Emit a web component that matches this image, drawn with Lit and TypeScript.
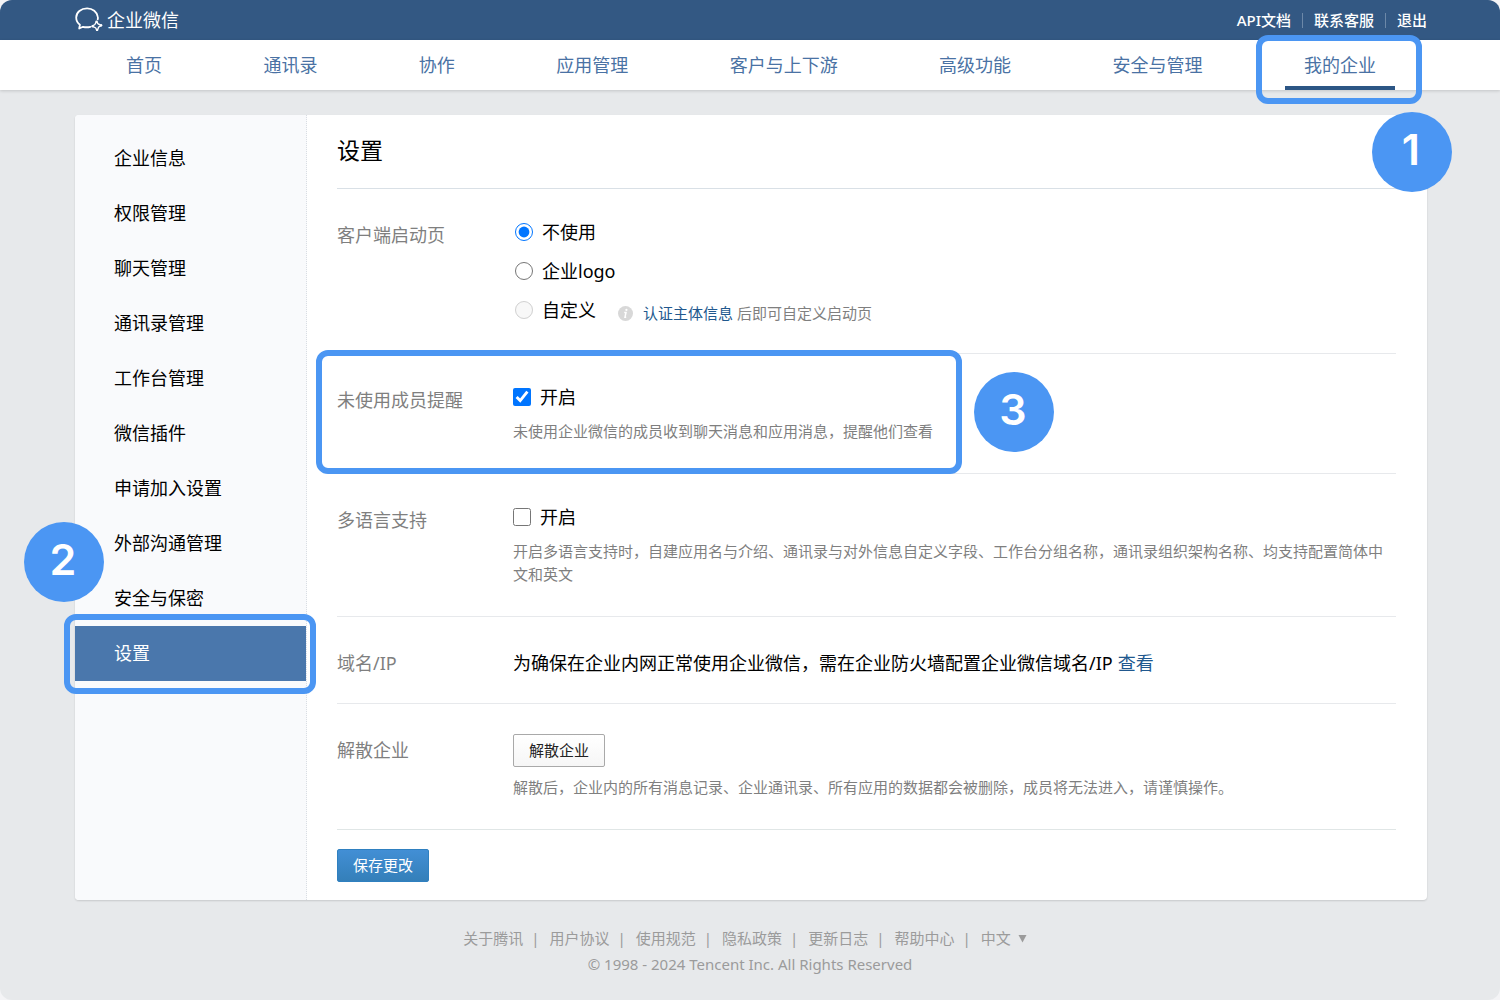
import { LitElement, html, css, svg } from "lit";
import { customElement, state } from "lit/decorators.js";

const NAV = ["首页", "通讯录", "协作", "应用管理", "客户与上下游", "高级功能", "安全与管理", "我的企业"];
const SIDE = ["企业信息", "权限管理", "聊天管理", "通讯录管理", "工作台管理", "微信插件", "申请加入设置", "外部沟通管理", "安全与保密", "设置"];
const FOOT = ["关于腾讯", "用户协议", "使用规范", "隐私政策", "更新日志", "帮助中心"];

const logo = svg`
  <svg class="logo-mark" viewBox="0 0 28 25" aria-hidden="true" fill="none" stroke="#fff" stroke-linecap="round" stroke-linejoin="round">
    <path stroke-width="1.8" d="M22.700 12.400C23 11.600 23 10.800 22.800 9.900C22 4.900 17.700 1.400 12.100 1.400C6 1.400 1.200 5.400 1.200 10.600C1.200 13.500 2.600 16.100 4.900 17.800L4.200 21.500L8 19.800C10.300 20.400 13 20.400 15.400 19.800"/>
    <path stroke-width="1.300" d="M22 14.600C22.200 16.400 23.300 17.500 25.200 17.700M26.200 18.900C24.300 19.100 23.200 20.200 22.900 22.100M21.600 23.100C21.400 21.200 20.300 20.100 18.400 19.800M17.500 18.600C19.400 18.400 20.500 17.300 20.800 15.500"/>
    <g fill="#fff" stroke="none">
      <circle cx="21.500" cy="14.800" r="1.200"/>
      <circle cx="26.100" cy="18.300" r="1.200"/>
      <circle cx="22.100" cy="22.900" r="1.200"/>
      <circle cx="17.600" cy="19.200" r="1.200"/>
    </g>
  </svg>`;

@customElement("app-root")
export class AppRoot extends LitElement {
  @state() private startPage = "none";
  @state() private remind = true;
  @state() private multilingual = false;

  static styles = css`
    :host {
      display: block;
      min-height: 100vh;
      background: #f4f4f6;
      font-family: "Noto Sans", "Noto Sans CJK SC", sans-serif;
      font-size: 18px;
      line-height: 24px;
      color: #000;
    }
    * { box-sizing: border-box; }
    a { color: inherit; text-decoration: none; }
    .window {
      min-height: 100vh;
      background: #e7e9eb;
      border-radius: 12px;
      overflow: hidden;
    }
    .topbar {
      display: flex;
      align-items: center;
      justify-content: space-between;
      height: 40px;
      padding: 0 73px 1px 75px;
      background: #335883;
      color: #fff;
    }
    .brand { display: flex; align-items: center; gap: 4px; }
    .logo-mark { width: 28px; height: 25px; }
    .top-links { display: flex; align-items: center; font-size: 15px; font-weight: 500; }
    .top-links a + a { margin-left: 11px; padding-left: 12px; position: relative; }
    .top-links a + a::before {
      content: "";
      position: absolute;
      left: 0;
      top: 5px;
      height: 15px;
      border-left: 1px solid #6c88a8;
    }
    .nav {
      display: flex;
      justify-content: space-between;
      height: 50px;
      padding: 0 105px 0 107px;
      background: #fff;
      box-shadow: 0 1px 3px rgba(0, 0, 0, 0.16);
      color: #4a72a4;
    }
    .nav-item { position: relative; padding: 0 19px; line-height: 50px; white-space: nowrap; }
    .nav-item.active { border-bottom: 4px solid #2c5685; }

    .callout {
      position: absolute;
      border: 6px solid #4b96f3;
      border-radius: 12px;
      pointer-events: none;
    }
    .badge {
      position: absolute;
      z-index: 2;
      display: flex;
      justify-content: center;
      width: 80px;
      height: 80px;
      padding-right: 2px;
      border-radius: 50%;
      background: #4b96f3;
      color: #fff;
      font: 600 43px/74px Inter, "Liberation Sans", sans-serif;
      pointer-events: none;
    }
    .callout-nav { left: -29px; right: -27px; top: -5px; height: 69px; }
    .badge-nav { right: -57px; top: 72px; }
    .callout-side { left: -11px; right: -10px; top: -12px; bottom: -13px; }
    .badge-side { left: -51px; top: -104px; }
    .callout-row { left: -21px; top: -4px; bottom: -1px; width: 646px; }
    .badge-row { left: 637px; top: 18px; }

    .panel {
      display: flex;
      margin: 25px 73px 0 75px;
      background: #fff;
      border-radius: 4px;
      box-shadow: 0 1px 2px rgba(0, 0, 0, 0.14);
    }
    .side {
      flex: 0 0 232px;
      padding-top: 16px;
      background: #f9fafc;
      border-right: 1px dotted #d9dde3;
      border-radius: 4px 0 0 4px;
    }
    .side-item { display: block; position: relative; padding: 0 39px; line-height: 55px; }
    .side-item.active { background: #4a77ac; color: #fff; }
    .content { flex: 1; min-width: 0; padding: 0 31px 18px 30px; }
    .title {
      margin: 0;
      padding: 19px 0 22px;
      border-bottom: 1px solid #d9e0e6;
      font-size: 23px;
      font-weight: 400;
      line-height: 32px;
    }
    .row {
      display: grid;
      grid-template-columns: 176px 1fr;
      position: relative;
      padding-bottom: 30px;
      border-bottom: 1px solid #e7e9ec;
    }
    .row.first { padding-bottom: 31px; }
    .row.short { padding-bottom: 28px; }
    .row.last { border-color: #e0e6e6; margin-bottom: 19px; }
    .name { padding-top: 34px; color: #7f7f7f; }
    .field { padding-top: 31px; }
    .field.text { padding-top: 34px; }
    .field.action { padding-top: 30px; }
    .options { display: flex; flex-direction: column; gap: 15px; }
    .option { display: flex; align-items: center; }
    .option label { display: flex; align-items: center; gap: 9px; }
    input { margin: 0; width: 18px; height: 18px; }
    input[type="radio"] { margin-left: 2px; }
    .desc { margin: 11px 0 0; font-size: 15px; line-height: 23px; color: #7f7f7f; }
    .action .desc { margin-top: 9px; }
    .note { display: flex; align-items: center; margin: 3px 0 -3px 22px; font-size: 15px; color: #7f7f7f; }
    .info { width: 15px; height: 15px; margin-right: 10px; }
    .link { color: #21588e; }
    .note .link { margin-right: 4px; }
    .text .link { margin-left: 5px; }
    .btn {
      display: block;
      height: 33px;
      padding: 0 15px 2px;
      border: 1px solid #a9a9a9;
      border-radius: 2px;
      background: linear-gradient(#fff, #f6f6f6);
      color: #222;
      font: inherit;
      font-size: 15px;
      line-height: 24px;
    }
    .btn.primary { border-color: #2f80c0; background: linear-gradient(#428fd5, #347fb9); color: #fff; }

    .footer { padding: 25px 0 20px; text-align: center; font-size: 15px; line-height: 26px; color: #9b9b9b; }
    .footer p { margin: 0; }
    .foot-links { display: flex; justify-content: center; padding-right: 10px; white-space: pre; }
    .sep { padding: 0 10px 0 8px; }
    .lang { padding: 0; border: 0; background: none; color: inherit; font: inherit; }
    .lang svg { width: 9px; height: 9px; margin-left: 7px; vertical-align: 1px; }
  `;

  private radio(id: string, label: string, disabled = false) {
    return html`<label for="start-${id}">
      <input id="start-${id}" type="radio" name="start" .checked=${this.startPage === id}
        ?disabled=${disabled} @change=${() => (this.startPage = id)} />
      <span>${label}</span>
    </label>`;
  }

  render() {
    return html`
      <div class="window">
        <header class="topbar">
          <a class="brand" href="#">${logo}<span>企业微信</span></a>
          <div class="top-links"><a href="#">API文档</a><a href="#">联系客服</a><a href="#">退出</a></div>
        </header>
        <nav class="nav">
          ${NAV.map((t, i) => i === NAV.length - 1
            ? html`<a class="nav-item active" href="#">${t}<span class="callout callout-nav"></span><span class="badge badge-nav">1</span></a>`
            : html`<a class="nav-item" href="#">${t}</a>`)}
        </nav>
        <main class="panel">
          <aside class="side">
            ${SIDE.map((t, i) => i === SIDE.length - 1
              ? html`<a class="side-item active" href="#">${t}<span class="callout callout-side"></span><span class="badge badge-side">2</span></a>`
              : html`<a class="side-item" href="#">${t}</a>`)}
          </aside>
          <section class="content">
            <h1 class="title">设置</h1>
            <div class="row first">
              <div class="name">客户端启动页</div>
              <div class="field options" role="radiogroup" aria-label="客户端启动页">
                <div class="option">${this.radio("none", "不使用")}</div>
                <div class="option">${this.radio("logo", "企业logo")}</div>
                <div class="option">
                  ${this.radio("custom", "自定义", true)}
                  <span class="note">
                    <svg class="info" viewBox="0 0 15 15" aria-hidden="true">
                      <circle cx="7.5" cy="7.5" r="7.5" fill="#d8d8d8"/>
                      <circle cx="8.400" cy="3.900" r="1.100" fill="#fff"/>
                      <path d="M6.200 6.400H8L7 11.200H8.200" fill="none" stroke="#fff" stroke-width="1.500"/>
                    </svg>
                    <a class="link" href="#">认证主体信息</a>后即可自定义启动页
                  </span>
                </div>
              </div>
            </div>
            <div class="row">
              <div class="name">未使用成员提醒</div>
              <div class="field">
                <div class="option"><label for="remind">
                  <input id="remind" type="checkbox" .checked=${this.remind}
                    @change=${() => (this.remind = !this.remind)} /><span>开启</span>
                </label></div>
                <p class="desc">未使用企业微信的成员收到聊天消息和应用消息，提醒他们查看</p>
              </div>
              <span class="callout callout-row"></span>
              <span class="badge badge-row">3</span>
            </div>
            <div class="row">
              <div class="name">多语言支持</div>
              <div class="field">
                <div class="option"><label for="multi">
                  <input id="multi" type="checkbox" .checked=${this.multilingual}
                    @change=${() => (this.multilingual = !this.multilingual)} /><span>开启</span>
                </label></div>
                <p class="desc">开启多语言支持时，自建应用名与介绍、通讯录与对外信息自定义字段、工作台分组名称，通讯录组织架构名称、均支持配置简体中文和英文</p>
              </div>
            </div>
            <div class="row short">
              <div class="name">域名/IP</div>
              <div class="field text">为确保在企业内网正常使用企业微信，需在企业防火墙配置企业微信域名/IP<a class="link" href="#">查看</a></div>
            </div>
            <div class="row last">
              <div class="name">解散企业</div>
              <div class="field action">
                <button class="btn" type="button">解散企业</button>
                <p class="desc">解散后，企业内的所有消息记录、企业通讯录、所有应用的数据都会被删除，成员将无法进入，请谨慎操作。</p>
              </div>
            </div>
            <button class="btn primary" type="button">保存更改</button>
          </section>
        </main>
        <footer class="footer">
          <div class="foot-links">
            ${FOOT.map((t) => html`<a href="#">${t}</a><span class="sep">|</span>`)}<button class="lang" type="button">中文<svg viewBox="0 0 9 9" aria-hidden="true"><path d="M0.500 1H8.500L4.500 8.500Z" fill="#9b9b9b"/></svg></button>
          </div>
          <p>© 1998 - 2024 Tencent Inc. All Rights Reserved</p>
        </footer>
      </div>
    `;
  }
}
